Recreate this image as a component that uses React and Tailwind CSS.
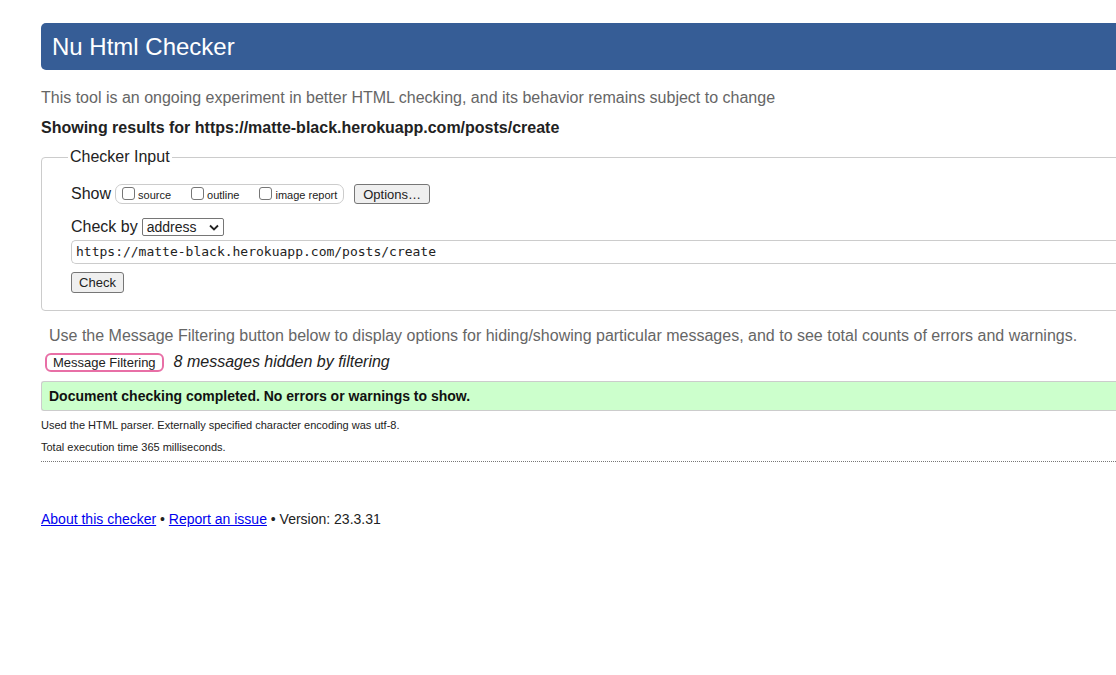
import React from "react";

const Checkbox = ({ label }) => (
  <label className="flex items-center gap-[3px] mr-[20px] last:mr-0">
    <span className="w-[13px] h-[13px] border border-[#767676] rounded-[3px] bg-white mt-[-2px]" />
    <span className="text-[11px] leading-none mt-[3px] text-[#222]">{label}</span>
  </label>
);

const App = () => {
  return (
    <div
      className="w-[1116px] h-[675px] overflow-hidden bg-white text-[#222]"
      style={{ fontFamily: '"Liberation Sans", Arial, sans-serif' }}
    >
      <div className="w-[1200px] pl-[41px] pt-[23px]">
        {/* HEADER */}
        <div className="h-[47px] bg-[#365d96] rounded-l-[5px] flex items-center pl-[11px]">
          <h1 className="text-white text-[24px] leading-none">Nu Html Checker</h1>
        </div>

        <p className="mt-[19px] text-[16px] leading-[18px] text-[#666]">
          This tool is an ongoing experiment in better HTML checking, and its behavior remains subject to change
        </p>
        <p className="mt-[12px] text-[16px] leading-[18px] font-bold">
          Showing results for https://matte-black.herokuapp.com/posts/create
        </p>

        {/* CHECKER INPUT */}
        <fieldset className="mt-[11px] border border-[#ccc] rounded-l-[4px] pb-[16px]">
          <legend className="text-[16px] leading-[18px] ml-[26px] px-[2px]">Checker Input</legend>

          <div className="pl-[29px] pt-[15px]">
            <div className="flex items-center h-[22px] mt-[2px]">
              <span className="text-[16px] mr-[4px]">Show</span>
              <div className="flex items-center h-[20px] border border-[#ccc] rounded-[7px] px-[6px]">
                <Checkbox label="source" />
                <Checkbox label="outline" />
                <Checkbox label="image report" />
              </div>
              <button className="ml-[10px] h-[20px] px-[8px] border border-[#767676] rounded-[3px] bg-[#efefef] text-[13px] leading-none">
                Options…
              </button>
            </div>

            <div className="flex items-center h-[20px] mt-[12px]">
              <span className="text-[16px] mr-[4px]">Check by</span>
              <div className="w-[82px] h-[18px] border border-[#767676] rounded-[2px] flex items-center justify-between px-[4px] text-[14px]">
                <span>address</span>
                <svg width="10" height="7" viewBox="0 0 10 7">
                  <path d="M1 1.5 L5 5.5 L9 1.5" fill="none" stroke="#222" strokeWidth="1.8" />
                </svg>
              </div>
            </div>

            <div className="mt-[3px] h-[24px] border border-[#ccc] border-r-0 rounded-l-[5px] flex items-center pl-[4px]">
              <span
                className="text-[13px]"
                style={{ fontFamily: '"DejaVu Sans Mono", "Liberation Mono", monospace' }}
              >
                https://matte-black.herokuapp.com/posts/create
              </span>
            </div>

            <button className="mt-[8px] h-[21px] w-[53px] border border-[#767676] rounded-[3px] bg-[#efefef] text-[13px] leading-none">
              Check
            </button>
          </div>
        </fieldset>

        {/* FILTERING */}
        <p className="mt-[16px] ml-[8px] text-[16px] leading-[18px] text-[#666]">
          Use the Message Filtering button below to display options for hiding/showing particular messages, and to see total counts of errors and warnings.
        </p>
        <div className="flex items-center mt-[7px] ml-[4px] h-[20px]">
          <button className="h-[19px] px-[6px] border-2 border-[#e86fa6] rounded-[6px] bg-white text-[13px] leading-none">
            Message Filtering
          </button>
          <span className="ml-[10px] text-[16px] italic">8 messages hidden by filtering</span>
        </div>

        <div className="mt-[9px] h-[30px] bg-[#ccffcc] border border-[#ccc] border-r-0 rounded-l-[3px] flex items-center pl-[7px]">
          <span className="text-[14px] font-bold text-[#111]">
            Document checking completed. No errors or warnings to show.
          </span>
        </div>

        <p className="mt-[8px] text-[11px] leading-[13px]">
          Used the HTML parser. Externally specified character encoding was utf-8.
        </p>
        <p className="mt-[9px] text-[11px] leading-[13px]">Total execution time 365 milliseconds.</p>
        <div className="mt-[7px] border-t border-dotted border-[#777]" />

        {/* FOOTER */}
        <p className="mt-[49px] text-[14px] leading-[16px]">
          <a href="#" className="text-[#0000ee] underline">About this checker</a>
          {" • "}
          <a href="#" className="text-[#0000ee] underline">Report an issue</a>
          {" • Version: 23.3.31"}
        </p>
      </div>
    </div>
  );
};

export default App;
